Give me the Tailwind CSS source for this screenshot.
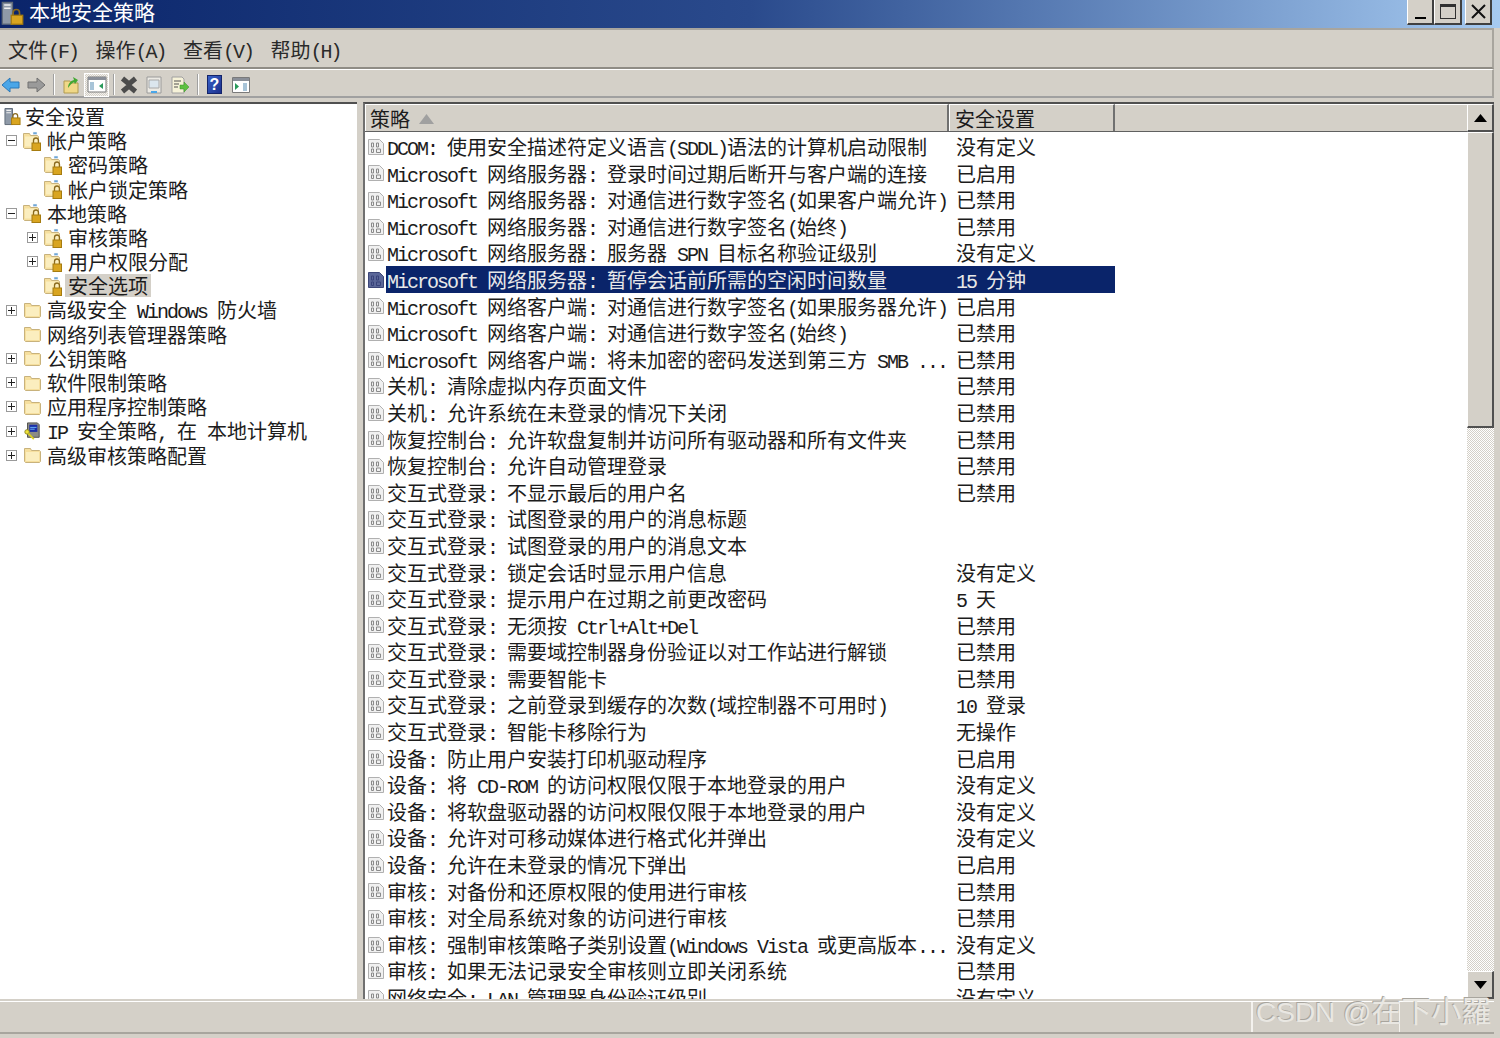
<!DOCTYPE html>
<html lang="zh-CN">
  <head>
    <meta charset="UTF-8" />
    <script src="https://cdn.jsdelivr.net/npm/@tailwindcss/browser@4"></script>
    <title>本地安全策略</title>
  </head>
  <body class="w-[1500px] h-[1038px] overflow-hidden bg-[#d4d0c8] text-[#1c1c1c] text-[20px] font-['Noto_Sans_CJK_SC','Liberation_Sans',sans-serif]">
    <svg class="hidden" xmlns="http://www.w3.org/2000/svg">
      <symbol id="policy" viewBox="0 0 16 18">
        <path d="M.5 1.500h11l4 4v11H.5z" fill="#f0f0f0" stroke="#b0b0b0" />
        <path d="M3.500 5h2v4h-2zM8.500 5h2v4h-2zM3.500 11h2v3.500h-2zM8.500 11h4v3.500h-4z" fill="none" stroke="#8a8a8a" />
      </symbol>
      <symbol id="policy-sel" viewBox="0 0 16 18">
        <path d="M.5 1.500h11l4 4v11H.5z" fill="#5a6698" stroke="#3c4678" />
        <path d="M3.500 5h2v4h-2zM8.500 5h2v4h-2zM3.500 11h2v3.500h-2zM8.500 11h4v3.500h-4z" fill="none" stroke="#38427a" />
      </symbol>
      <symbol id="folder" viewBox="0 0 18 18">
        <path d="M1.500 4V2.500h6l1 2h8l1 1v10l-1 1h-14l-1-1z" fill="#f6df9e" stroke="#c8b27c" />
        <path d="M3 6h13v9H3z" fill="#fbeebf" />
      </symbol>
      <symbol id="folder-lock" viewBox="0 0 18 20">
        <path d="M.5 4V2.500h6l1 2h7l1 1v11l-1 1H1.500l-1-1z" fill="#f6df9e" stroke="#c8b27c" />
        <path d="M2 5.500h12v10H2z" fill="#fbeebf" />
        <path d="M10 1h4v2.500h-4z" fill="#6ea6d8" stroke="#f4f4f4" stroke-width=".5" />
        <path d="M10.500 12V9.500a2.500 2.500 0 0 1 5 0V12" fill="none" stroke="#8a6a1e" stroke-width="1.300" />
        <rect x="9" y="12" width="8.500" height="7.500" fill="#d9a520" stroke="#a67c10" />
      </symbol>
      <symbol id="server-lock" viewBox="0 0 18 20">
        <path d="M1 1h8v17H1z" fill="#8f9aa8" stroke="#5f6a78" />
        <path d="M2.500 3h5M2.500 5.500h5" stroke="#f0f0f0" stroke-width="1.200" />
        <path d="M9.500 11V9a2.500 2.500 0 0 1 5 0v2" fill="none" stroke="#8a6a1e" stroke-width="1.300" />
        <rect x="8" y="11" width="9" height="7" fill="#d9a520" stroke="#a67c10" />
      </symbol>
      <symbol id="ipsec" viewBox="0 0 18 20">
        <path d="M4 1h11l2 2v14H4z" fill="#8c8c84" stroke="#4a4a46" />
        <path d="M6 3h9v8H6z" fill="#1c2fa8" />
        <path d="M7 6h7M7 8h5" stroke="#6ec0ff" />
        <circle cx="3.500" cy="11" r="2.500" fill="#efe23a" stroke="#8a8420" />
        <path d="M5 13l6 6" stroke="#dccf20" stroke-width="2" />
      </symbol>
    </svg>

    <div class="flex flex-col h-full w-full">
      <!-- title bar -->
      <div class="relative flex items-center h-[28px] shrink-0 bg-gradient-to-r from-[#0a246a] via-[#2a4a8c] to-[#a6caf0] text-white">
        <svg class="w-[23px] h-[26px] ml-[1px] mr-[5px]"><use href="#server-lock" /></svg>
        <span class="text-[21px] leading-[24px] -mt-[6px]">本地安全策略</span>
        <div class="ml-auto flex self-start mr-[8px]">
          <button class="w-[27px] h-[25px] bg-[#d4d0c8] border-r-2 border-b-2 border-[#404040] border-l border-l-white flex items-end justify-center pb-[4px]">
            <span class="block w-[11px] h-[2px] bg-black"></span>
          </button>
          <button class="w-[28px] h-[25px] bg-[#d4d0c8] border-r-2 border-b-2 border-[#404040] border-l border-l-white flex items-center justify-center mr-[3px]">
            <span class="block w-[16px] h-[15px] border border-t-[3px] border-[#303030]"></span>
          </button>
          <button class="w-[27px] h-[25px] bg-[#d4d0c8] border-r-2 border-b-2 border-[#404040] border-l border-l-white flex items-center justify-center">
            <svg width="15" height="15" viewBox="0 0 15 15"><path d="M1 1l13 13M14 1L1 14" stroke="#111" stroke-width="2" /></svg>
          </button>
        </div>
      </div>

      <!-- menu bar -->
      <div class="h-[41px] shrink-0 mr-[6px] pt-[3px] border-t-2 border-t-[#a8a59e] border-b-2 border-b-[#8f8c85] border-r-2 border-r-[#a8a59e] flex items-center pl-[8px] gap-[20px] text-[#2a2a2a]" id="menu"></div>

      <!-- toolbar -->
      <div class="h-[29px] shrink-0 mr-[6px] pt-[3px] border-t border-t-white border-b-2 border-b-[#a0a0a0] border-r-2 border-r-[#a8a59e] flex items-center">
        <svg width="20" height="18" viewBox="0 0 20 18" class="ml-[1px]"><path d="M9 2L1 9l8 7v-4h9V6H9z" fill="#4aa6e8" stroke="#2a78b8" /></svg>
        <svg width="20" height="18" viewBox="0 0 20 18" class="ml-[5px]"><path d="M11 2l8 7-8 7v-4H2V6h9z" fill="#9a9a9a" stroke="#707070" /></svg>
        <span class="w-[2px] h-[21px] bg-[#a0a0a0] border-r border-white ml-[7px]"></span>
        <svg width="16" height="18" viewBox="0 0 16 18" class="ml-[8px]"><path d="M1 5h6l1 2h7v10H1z" fill="#f0d888" stroke="#b09a50" /><path d="M5 12c0-4 2-7 6-8l-1-3 5 3-3 4-1-2c-2 1-4 3-6 6z" fill="#42a832" /></svg>
        <div class="ml-[5px] w-[25px] h-[24px] flex items-center justify-center border border-white bg-[repeating-conic-gradient(#d4d0c8_0_25%,#f4f2ee_0_50%)] bg-[length:2px_2px]">
          <svg width="20" height="17" viewBox="0 0 20 17"><path d="M1 1h18v15H1z" fill="#fff" stroke="#7a7a7a" /><path d="M1 1h18v3H1z" fill="#8a8f98" /><path d="M3 6h4v8H3z" fill="#a8c4d8" /><path d="M16 7v6l-4-3z" fill="#2a9a5a" /></svg>
        </div>
        <span class="w-[2px] h-[21px] bg-[#a0a0a0] border-r border-white ml-[4px]"></span>
        <svg width="18" height="18" viewBox="0 0 18 18" class="ml-[5px]"><path d="M2.500 2.500L9 8l6.500-5.500M2.500 15.500L9 10l6.500 5.500" stroke="#4c4c4c" stroke-width="5" fill="none" /></svg>
        <svg width="16" height="18" viewBox="0 0 16 18" class="ml-[8px]"><path d="M1 1h14v16H1z" fill="#eceae4" stroke="#9a9a9a" /><path d="M3 4h10v8H3z" fill="#dbe6ee" stroke="#a8a8a8" /><path d="M5 15h6v2H5z" fill="#4aa6e8" /></svg>
        <svg width="18" height="18" viewBox="0 0 18 18" class="ml-[9px]"><path d="M1 1h10l2 2v14H1z" fill="#f6f2d8" stroke="#a0a0a0" /><path d="M3 5h7M3 8h5M3 11h4" stroke="#505050" /><path d="M9 9h4V6l5 5-5 5v-3H9z" fill="#5cc040" stroke="#3a9028" stroke-width=".5" /></svg>
        <span class="w-[2px] h-[21px] bg-[#a0a0a0] border-r border-white ml-[8px]"></span>
        <div class="ml-[8px] w-[15px] h-[19px] bg-gradient-to-br from-[#3a62c8] to-[#1c2f8c] border border-[#14246a] text-white text-[16px] leading-[17px] text-center font-['Liberation_Sans'] font-bold">?</div>
        <svg width="18" height="16" viewBox="0 0 18 16" class="ml-[10px]"><path d="M.5 .5h17v15H.5z" fill="#fff" stroke="#7a7a7a" /><path d="M1 1h16v3H1z" fill="#8a8f98" /><path d="M3 6v7l4-3.500z" fill="#2a9a5a" /><path d="M11 6h4v8h-4z" fill="#a8c4d8" /></svg>
      </div>

      <!-- panes -->
      <div class="flex h-[897px] mt-[4px] mr-[6px] shrink-0">
        <div class="w-[357px] bg-white border-t-2 border-t-[#505050] pt-[0.5px] overflow-hidden" id="tree"></div>
        <div class="w-[6px]"></div>
        <div class="flex-1 flex bg-white border-t-2 border-t-[#505050] border-l-2 border-l-[#707070] overflow-hidden">
          <div class="flex-1 flex flex-col min-w-0">
            <div class="flex h-[28px] shrink-0 bg-[#d4d0c8] border-b border-b-[#606060]">
              <div class="w-[584px] flex items-center pl-[4px] pt-[2px] border-r-2 border-r-[#707070] border-t border-t-white border-l border-l-white">
                <span>策略</span>
                <svg width="15" height="10" viewBox="0 0 15 10" class="ml-[9px]"><path d="M7.500 0L15 10H0z" fill="#a0a0a0" /></svg>
              </div>
              <div class="w-[166px] flex items-center pl-[5px] pt-[2px] border-r-2 border-r-[#707070] border-t border-t-white border-l border-l-white">安全设置</div>
              <div class="flex-1 border-t border-t-white"></div>
            </div>
            <div class="flex-1 pt-[1px] overflow-hidden" id="list"></div>
          </div>
          <div class="w-[27px] shrink-0 flex flex-col bg-[#d4d0c8]">
            <button class="h-[28px] shrink-0 flex items-center justify-center border-t border-l border-white border-r-2 border-b-2 border-r-[#505050] border-b-[#505050]">
              <svg width="13" height="8" viewBox="0 0 13 8"><path d="M6.500 0L13 8H0z" fill="#000" /></svg>
            </button>
            <div class="h-[296px] shrink-0 border-t border-l border-white border-r-2 border-b-2 border-r-[#505050] border-b-[#505050]"></div>
            <div class="flex-1 bg-[repeating-conic-gradient(#d4d0c8_0_25%,#fff_0_50%)] bg-[length:2px_2px]"></div>
            <button class="h-[28px] shrink-0 flex items-center justify-center border-t border-l border-white border-r-2 border-b-2 border-r-[#505050] border-b-[#505050]">
              <svg width="13" height="8" viewBox="0 0 13 8"><path d="M0 0h13L6.500 8z" fill="#000" /></svg>
            </button>
          </div>
        </div>
      </div>

      <!-- status bar -->
      <div class="relative flex h-[33px] mt-[2px] mr-[6px] shrink-0 border-t border-t-white border-b-2 border-b-[#a8a59e]">
        <div class="w-[1252px] border-r border-r-[#f4f2ee]"></div>
        <div class="w-[148px] border-r border-r-[#f4f2ee] border-l border-l-[#f4f2ee]"></div>
        <div class="flex-1"></div>
        <span class="absolute left-[1256px] -top-[8px] text-[28px] leading-[36px] whitespace-nowrap text-[#e9e7e2] [text-shadow:-1px_-1px_0_#a8a59e] font-['Liberation_Sans','Noto_Sans_CJK_TC',sans-serif]">CSDN @<span class="text-[30px]">在下小羅</span></span>
      </div>
    </div>

    <script>
      // half width latin like the bitmap font in the shot
      const fmt = (s) =>
        s.replace(
          /[\x20-\x7e]+/g,
          (m) => `<span class="font-['Liberation_Mono'] text-[20px] leading-none tracking-[-2px] whitespace-pre">${m}</span>`
        );

      document.getElementById("menu").innerHTML = ["文件(F)", "操作(A)", "查看(V)", "帮助(H)"]
        .map((m) => `<span class="w-[67.500px] whitespace-nowrap">${fmt(m)}</span>`)
        .join("");

      const tree = [
        [0, "", "server-lock", "安全设置"],
        [1, "-", "folder-lock", "帐户策略"],
        [2, "", "folder-lock", "密码策略"],
        [2, "", "folder-lock", "帐户锁定策略"],
        [1, "-", "folder-lock", "本地策略"],
        [2, "+", "folder-lock", "审核策略"],
        [2, "+", "folder-lock", "用户权限分配"],
        [2, "", "folder-lock", "安全选项", true],
        [1, "+", "folder", "高级安全 Windows 防火墙"],
        [1, "", "folder", "网络列表管理器策略"],
        [1, "+", "folder", "公钥策略"],
        [1, "+", "folder", "软件限制策略"],
        [1, "+", "folder", "应用程序控制策略"],
        [1, "+", "ipsec", "IP 安全策略, 在 本地计算机"],
        [1, "+", "folder", "高级审核策略配置"],
      ];
      const indent = ["pl-[4px]", "pl-[6px]", "pl-[27px]"];
      document.getElementById("tree").innerHTML = tree
        .map(([lvl, exp, icon, label, sel]) => {
          const box =
            lvl === 0
              ? ""
              : `<span class="w-[11px] h-[11px] shrink-0 mr-[6px] flex items-center justify-center ${exp ? "border border-[#9a9a9a] bg-white" : ""}">
                  ${exp ? `<svg width="7" height="7" viewBox="0 0 7 7"><path d="${exp === "+" ? "M0 3.500h7M3.500 0v7" : "M0 3.500h7"}" stroke="#222" /></svg>` : ""}
                </span>`;
          const ic = lvl === 0 ? "w-[17px] h-[20px]" : icon === "folder-lock" ? "w-[18px] h-[20px]" : "w-[18px] h-[18px]";
          return `<div class="flex items-center h-[24.2px] whitespace-nowrap ${indent[lvl]}">
              ${box}<svg class="${ic} shrink-0"><use href="#${icon}" /></svg>
              <span class="${lvl === 0 ? "ml-[1px]" : "ml-[3px]"} px-[3px] leading-[23px] ${sel ? "bg-[#d4d0c8]" : ""}">${fmt(label)}</span>
            </div>`;
        })
        .join("");

      const rows = [
        ["DCOM: 使用安全描述符定义语言(SDDL)语法的计算机启动限制", "没有定义"],
        ["Microsoft 网络服务器: 登录时间过期后断开与客户端的连接", "已启用"],
        ["Microsoft 网络服务器: 对通信进行数字签名(如果客户端允许)", "已禁用"],
        ["Microsoft 网络服务器: 对通信进行数字签名(始终)", "已禁用"],
        ["Microsoft 网络服务器: 服务器 SPN 目标名称验证级别", "没有定义"],
        ["Microsoft 网络服务器: 暂停会话前所需的空闲时间数量", "15 分钟", true],
        ["Microsoft 网络客户端: 对通信进行数字签名(如果服务器允许)", "已启用"],
        ["Microsoft 网络客户端: 对通信进行数字签名(始终)", "已禁用"],
        ["Microsoft 网络客户端: 将未加密的密码发送到第三方 SMB ...", "已禁用"],
        ["关机: 清除虚拟内存页面文件", "已禁用"],
        ["关机: 允许系统在未登录的情况下关闭", "已禁用"],
        ["恢复控制台: 允许软盘复制并访问所有驱动器和所有文件夹", "已禁用"],
        ["恢复控制台: 允许自动管理登录", "已禁用"],
        ["交互式登录: 不显示最后的用户名", "已禁用"],
        ["交互式登录: 试图登录的用户的消息标题", ""],
        ["交互式登录: 试图登录的用户的消息文本", ""],
        ["交互式登录: 锁定会话时显示用户信息", "没有定义"],
        ["交互式登录: 提示用户在过期之前更改密码", "5 天"],
        ["交互式登录: 无须按 Ctrl+Alt+Del", "已禁用"],
        ["交互式登录: 需要域控制器身份验证以对工作站进行解锁", "已禁用"],
        ["交互式登录: 需要智能卡", "已禁用"],
        ["交互式登录: 之前登录到缓存的次数(域控制器不可用时)", "10 登录"],
        ["交互式登录: 智能卡移除行为", "无操作"],
        ["设备: 防止用户安装打印机驱动程序", "已启用"],
        ["设备: 将 CD-ROM 的访问权限仅限于本地登录的用户", "没有定义"],
        ["设备: 将软盘驱动器的访问权限仅限于本地登录的用户", "没有定义"],
        ["设备: 允许对可移动媒体进行格式化并弹出", "没有定义"],
        ["设备: 允许在未登录的情况下弹出", "已启用"],
        ["审核: 对备份和还原权限的使用进行审核", "已禁用"],
        ["审核: 对全局系统对象的访问进行审核", "已禁用"],
        ["审核: 强制审核策略子类别设置(Windows Vista 或更高版本...", "没有定义"],
        ["审核: 如果无法记录安全审核则立即关闭系统", "已禁用"],
        ["网络安全: LAN 管理器身份验证级别", "没有定义"],
      ];
      document.getElementById("list").innerHTML = rows
        .map(([name, val, sel]) => {
          const c = sel ? "bg-[#0a246a] text-[#e8e8e8]" : "";
          return `<div class="flex items-center h-[26.6px] whitespace-nowrap">
              <svg class="w-[16px] h-[18px] mt-[1px] ml-[3px] mr-[2px] shrink-0"><use href="#${sel ? "policy-sel" : "policy"}" /></svg>
              <span class="block w-[563px] h-[26.6px] pl-[1px] leading-[28.6px] shrink-0 ${c}">${fmt(name)}</span>
              <span class="block w-[166px] h-[26.6px] pl-[7px] leading-[28.6px] shrink-0 ${c}">${fmt(val)}</span>
            </div>`;
        })
        .join("");
    </script>
  </body>
</html>
